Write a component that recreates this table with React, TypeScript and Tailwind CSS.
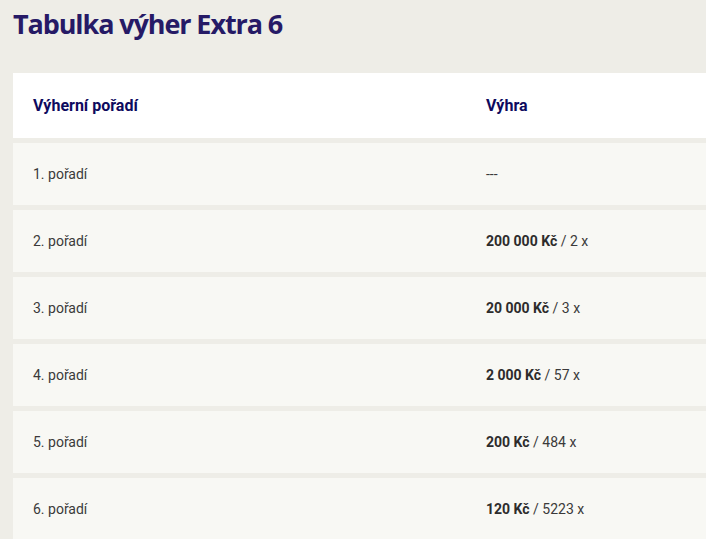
import React from "react";

const rows: { label: string; bold?: string; rest?: string; dash?: boolean }[] = [
  { label: "1. pořadí", dash: true },
  { label: "2. pořadí", bold: "200 000 Kč", rest: " / 2 x" },
  { label: "3. pořadí", bold: "20 000 Kč", rest: " / 3 x" },
  { label: "4. pořadí", bold: "2 000 Kč", rest: " / 57 x" },
  { label: "5. pořadí", bold: "200 Kč", rest: " / 484 x" },
  { label: "6. pořadí", bold: "120 Kč", rest: " / 5223 x" },
];

export default function App() {
  return (
    <div className="min-h-[539px] w-[706px] overflow-hidden bg-[#eeede7] pl-[13px]">
      <h1 className="pt-[6px] pb-[31px] text-[27px] leading-[36px] font-bold text-[#261a66] tracking-[-1.1px] [font-family:'Open_Sans',sans-serif]">
        Tabulka výher Extra 6
      </h1>
      <div className="flex w-[800px] flex-col gap-[5px] [font-family:'Liberation_Sans_Narrow','Roboto',sans-serif]">
        <div className="flex h-[65px] items-center bg-white text-[16px] font-bold text-[#0e0a5e]">
          <div className="w-[473px] pl-[20px]">Výherní pořadí</div>
          <div>Výhra</div>
        </div>
        {rows.map((r) => (
          <div key={r.label} className="flex h-[62px] items-center bg-[#f8f8f4] text-[14px] text-[#3b3a3a]">
            <div className="w-[473px] pl-[20px]">{r.label}</div>
            <div>
              {r.dash ? (
                "---"
              ) : (
                <>
                  <span className="font-bold text-[#2d2c2c]">{r.bold}</span>
                  {r.rest}
                </>
              )}
            </div>
          </div>
        ))}
      </div>
    </div>
  );
}
